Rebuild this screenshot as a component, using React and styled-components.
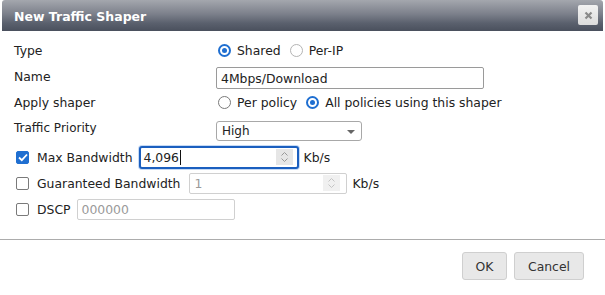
import React from 'react';
import styled, { createGlobalStyle, css } from 'styled-components';

const GlobalStyle = createGlobalStyle`
  html, body {
    margin: 0;
    padding: 0;
    background: #ffffff;
  }
  body {
    font-family: "DejaVu Sans", Verdana, sans-serif;
    font-size: 12.4px;
    color: #222;
  }
`;

const Dialog = styled.div`
  width: 605px;
  height: 295px;
  box-sizing: border-box;
  padding: 0 2px;
  display: flex;
  flex-direction: column;
`;

const TitleBar = styled.div`
  height: 31px;
  border-radius: 3px 3px 0 0;
  background: linear-gradient(to bottom, #a4a7ae 0%, #7c808b 45%, #5a606d 75%, #4a505d 100%);
  display: flex;
  align-items: center;
  justify-content: space-between;
  padding: 0 5px 0 12px;
  box-sizing: border-box;
`;

const Title = styled.span`
  color: #fff;
  font-weight: bold;
  font-size: 12.5px;
  margin-top: 1px;
`;

const CloseButton = styled.div`
  width: 20px;
  height: 20px;
  border-radius: 2px;
  background: linear-gradient(to bottom, #f2f2f2, #dcdcdc);
  display: flex;
  align-items: center;
  justify-content: center;
  color: #8a8a8a;
  margin-bottom: 1px;
`;

const Body = styled.div`
  padding: 6px 12px 0 12px;
  display: flex;
  flex-direction: column;
`;

const Row = styled.div`
  height: 26px;
  display: flex;
  align-items: center;
  ${(p) => p.$gapTop && css`margin-top: ${p.$gapTop}px;`}
`;

const Label = styled.div`
  width: 202px;
  flex: none;
  font-size: ${(p) => (p.$small ? '12px' : '12.4px')};
  ${(p) => p.$up && css`margin-top: -${p.$up}px;`}
`;

const Controls = styled.div`
  display: flex;
  align-items: center;
  align-self: ${(p) => (p.$bottom ? 'flex-end' : 'center')};
`;

const RadioWrap = styled.label`
  display: flex;
  align-items: center;
  margin-left: 2px;
  margin-right: 7px;
`;

const RadioCircle = styled.span`
  width: 13px;
  height: 13px;
  box-sizing: border-box;
  border-radius: 50%;
  border: ${(p) => (p.$checked ? '2px solid #1f6fd1' : `1px solid ${p.$light ? '#b4b4b4' : '#7a7a7a'}`)};
  margin-right: 6px;
  display: flex;
  align-items: center;
  justify-content: center;
  background: #fff;
  &::after {
    content: '';
    display: ${(p) => (p.$checked ? 'block' : 'none')};
    width: 5px;
    height: 5px;
    border-radius: 50%;
    background: #1f6fd1;
  }
`;

const Radio = ({ checked, light, children }) => (
  <RadioWrap>
    <RadioCircle $checked={checked} $light={light} />
    {children}
  </RadioWrap>
);

const TextInput = styled.div`
  box-sizing: border-box;
  width: ${(p) => p.$w}px;
  height: ${(p) => p.$h || 21}px;
  border: 1px solid ${(p) => (p.$disabled ? '#d0d0d0' : '#9a9a9a')};
  border-radius: 2px;
  padding: 0 4px;
  display: flex;
  align-items: center;
  color: ${(p) => (p.$disabled ? '#9a9a9a' : '#222')};
  background: #fff;
  ${(p) =>
    p.$focus &&
    css`
      border: 2px solid #1b5fbf;
      border-radius: 3px;
      box-shadow: 0 0 0 1px #c6daf5;
      padding: 0 3px;
    `}
`;

const InputText = styled.span`
  flex: 1;
  display: flex;
  align-items: center;
`;

const Caret = styled.span`
  display: inline-block;
  width: 1px;
  height: 15px;
  background: #111;
  margin-left: 1px;
`;

const Spinner = styled.span`
  width: 17px;
  height: 16px;
  background: ${(p) => (p.$disabled ? '#f0f0f0' : '#e6e6e6')};
  display: flex;
  align-items: center;
  justify-content: center;
  margin-right: ${(p) => (p.$focus ? '1px' : '2px')};
`;

const SpinIcon = ({ color }) => (
  <svg width="9" height="12" viewBox="0 0 9 12">
    <path d="M1.5 4.5 L4.5 1.5 L7.5 4.5" fill="none" stroke={color} strokeWidth="1" />
    <path d="M1.5 7.5 L4.5 10.5 L7.5 7.5" fill="none" stroke={color} strokeWidth="1" />
  </svg>
);

const Select = styled.div`
  box-sizing: border-box;
  width: 146px;
  height: 20px;
  border: 1px solid #a8a8a8;
  border-radius: 3px;
  display: flex;
  align-items: center;
  justify-content: space-between;
  padding: 0 6px 0 5px;
  font-size: 12px;
  background: #fff;
`;

const Arrow = styled.span`
  width: 0;
  height: 0;
  border-left: 4px solid transparent;
  border-right: 4px solid transparent;
  border-top: 4px solid #666;
  margin-top: 1px;
`;

const CheckWrap = styled.label`
  display: flex;
  align-items: center;
  margin-left: 2px;
`;

const CheckBox = styled.span`
  width: 13px;
  height: 13px;
  box-sizing: border-box;
  border-radius: 2px;
  border: 1px solid ${(p) => (p.$checked ? '#1f6fd1' : '#7a7a7a')};
  background: ${(p) => (p.$checked ? '#1f6fd1' : '#fff')};
  display: flex;
  align-items: center;
  justify-content: center;
  margin-right: 8px;
`;

const CheckLabel = styled.span`
  margin-right: ${(p) => p.$gap || 6}px;
`;

const Unit = styled.span`
  margin-left: 5px;
`;

const Separator = styled.div`
  height: 1px;
  background: #acacac;
  margin: 17px -2px 0 -2px;
`;

const Footer = styled.div`
  display: flex;
  justify-content: flex-end;
  gap: 7px;
  padding: 12px 19px 0 0;
`;

const Button = styled.div`
  box-sizing: border-box;
  height: 28px;
  padding: 0 ${(p) => (p.$wide ? 13 : 12)}px;
  border: 1px solid #cfcfcf;
  border-radius: 3px;
  background: #e8e8e8;
  color: #333;
  font-size: 12.4px;
  display: flex;
  align-items: center;
  justify-content: center;
  min-width: 45px;
`;

const Check = ({ checked, gap, children }) => (
  <CheckWrap>
    <CheckBox $checked={checked}>
      {checked && (
        <svg width="10" height="9" viewBox="0 0 10 9">
          <path d="M1 4.5 L3.8 7.2 L9 1.5" fill="none" stroke="#fff" strokeWidth="1.8" />
        </svg>
      )}
    </CheckBox>
    <CheckLabel $gap={gap}>{children}</CheckLabel>
  </CheckWrap>
);

export default function App() {
  return (
    <>
      <GlobalStyle />
      <Dialog>
        <TitleBar>
          <Title>New Traffic Shaper</Title>
          <CloseButton>
            <svg width="9" height="9" viewBox="0 0 9 9">
              <path d="M1.5 1.5 L7.5 7.5 M7.5 1.5 L1.5 7.5" stroke="#8a8a8a" strokeWidth="2.2" />
            </svg>
          </CloseButton>
        </TitleBar>
        <Body>
          <Row>
            <Label>Type</Label>
            <Controls>
              <Radio checked>Shared</Radio>
              <Radio light>Per-IP</Radio>
            </Controls>
          </Row>
          <Row>
            <Label>Name</Label>
            <Controls $bottom>
              <TextInput $w={268} $h={22}>
                <InputText>4Mbps/Download</InputText>
              </TextInput>
            </Controls>
          </Row>
          <Row>
            <Label>Apply shaper</Label>
            <Controls>
              <Radio>Per policy</Radio>
              <Radio checked>All policies using this shaper</Radio>
            </Controls>
          </Row>
          <Row>
            <Label $small>Traffic Priority</Label>
            <Controls $bottom>
              <Select>
                High
                <Arrow />
              </Select>
            </Controls>
          </Row>
          <Row $gapTop={3}>
            <Check checked>Max Bandwidth</Check>
            <TextInput $w={160} $h={23} $focus>
              <InputText>
                4,096
                <Caret />
              </InputText>
              <Spinner $focus>
                <SpinIcon color="#999" />
              </Spinner>
            </TextInput>
            <Unit>Kb/s</Unit>
          </Row>
          <Row>
            <Check gap={9}>Guaranteed Bandwidth</Check>
            <TextInput $w={158} $disabled>
              <InputText>1</InputText>
              <Spinner $disabled>
                <SpinIcon color="#c4c4c4" />
              </Spinner>
            </TextInput>
            <Unit>Kb/s</Unit>
          </Row>
          <Row>
            <Check>DSCP</Check>
            <TextInput $w={158} $disabled>
              <InputText>000000</InputText>
            </TextInput>
          </Row>
        </Body>
        <Separator />
        <Footer>
          <Button>OK</Button>
          <Button $wide>Cancel</Button>
        </Footer>
      </Dialog>
    </>
  );
}
